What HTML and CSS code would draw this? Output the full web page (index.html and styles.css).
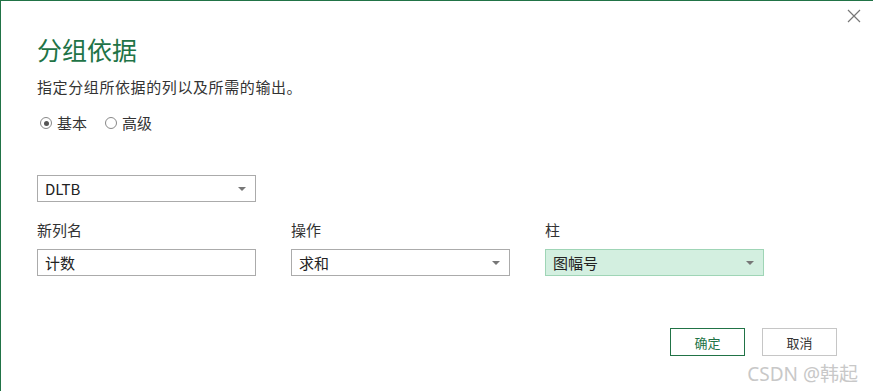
FILE: index.html
```html
<!DOCTYPE html>
<html lang="zh-CN">
<head>
    <meta charset="UTF-8">
    <title>分组依据</title>
    <link rel="stylesheet" href="styles.css">
</head>
<body>
    <div class="dialog">
        <button class="close" type="button">
            <svg width="14" height="14" viewBox="0 0 14 14"><path d="M1 1L13 13M13 1L1 13" stroke="#777" stroke-width="1.2"/></svg>
        </button>
        <h1>分组依据</h1>
        <p class="desc">指定分组所依据的列以及所需的输出。</p>
        <div class="radios">
            <label class="radio"><span class="dot checked"></span>基本</label>
            <label class="radio"><span class="dot"></span>高级</label>
        </div>
        <div class="select wide">DLTB<span class="arrow"></span></div>
        <div class="row">
            <div class="field">
                <div class="label">新列名</div>
                <div class="input">计数</div>
            </div>
            <div class="field">
                <div class="label">操作</div>
                <div class="select">求和<span class="arrow"></span></div>
            </div>
            <div class="field">
                <div class="label">柱</div>
                <div class="select active">图幅号<span class="arrow"></span></div>
            </div>
        </div>
        <div class="actions">
            <button class="btn primary" type="button">确定</button>
            <button class="btn" type="button">取消</button>
        </div>
        <div class="mark">CSDN @韩起</div>
    </div>
</body>
</html>
```

FILE: styles.css
```css
html, body {
    margin: 0;
    padding: 0;
    background: #fff;
}
body {
    font-family: "Noto Sans CJK SC", "Noto Sans", sans-serif;
    color: #333;
}
.dialog {
    position: relative;
    width: 873px;
    height: 391px;
    border-top: 1px solid #217346;
    border-left: 1px solid #217346;
    padding: 0 0 0 36px;
    box-sizing: border-box;
    overflow: hidden;
}
.close {
    position: absolute;
    top: 8px;
    right: 12px;
    border: none;
    background: none;
    padding: 0;
    width: 14px;
    height: 14px;
}
h1 {
    margin: 0;
    padding-top: 30px;
    font-size: 25px;
    font-weight: normal;
    line-height: 36px;
    color: #217346;
}
.desc {
    margin: 10px 0 0;
    font-size: 15px;
    line-height: 20px;
    letter-spacing: 0.6px;
}
.radios {
    display: flex;
    gap: 18px;
    margin-top: 16px;
    padding-left: 3px;
    font-size: 15px;
    line-height: 20px;
}
.radio {
    display: flex;
    align-items: center;
    gap: 5px;
}
.dot {
    width: 12px;
    height: 12px;
    border: 1px solid #888;
    border-radius: 50%;
    box-sizing: border-box;
    position: relative;
}
.dot.checked::after {
    content: "";
    position: absolute;
    left: 2.5px;
    top: 2.5px;
    width: 5px;
    height: 5px;
    border-radius: 50%;
    background: #555;
}
.select, .input {
    position: relative;
    width: 219px;
    height: 27px;
    border: 1px solid #ababab;
    box-sizing: border-box;
    padding-left: 7px;
    font-size: 15px;
    line-height: 25px;
    color: #222;
    background: #fff;
}
.select.wide {
    margin-top: 42px;
}
.select.active {
    background: #d3efe0;
    border-color: #9fd5b6;
}
.arrow {
    position: absolute;
    right: 9px;
    top: 11px;
    width: 0;
    height: 0;
    border-left: 4px solid transparent;
    border-right: 4px solid transparent;
    border-top: 4px solid #777;
}
.row {
    display: flex;
    gap: 35px;
    margin-top: 18px;
}
.label {
    font-size: 15px;
    line-height: 20px;
    margin-bottom: 9px;
}
.actions {
    display: flex;
    gap: 17px;
    justify-content: flex-end;
    margin: 52px 36px 0 0;
}
.btn {
    width: 75px;
    height: 28px;
    border: 1px solid #c6c6c6;
    background: #fff;
    font-family: inherit;
    font-size: 13px;
    color: #333;
    padding: 0;
}
.btn.primary {
    border-color: #217346;
    color: #217346;
}
.mark {
    position: absolute;
    right: 15px;
    bottom: 4px;
    font-size: 19px;
    color: #c8c8c8;
    font-family: "Noto Sans", "Noto Sans CJK SC", sans-serif;
}
```
